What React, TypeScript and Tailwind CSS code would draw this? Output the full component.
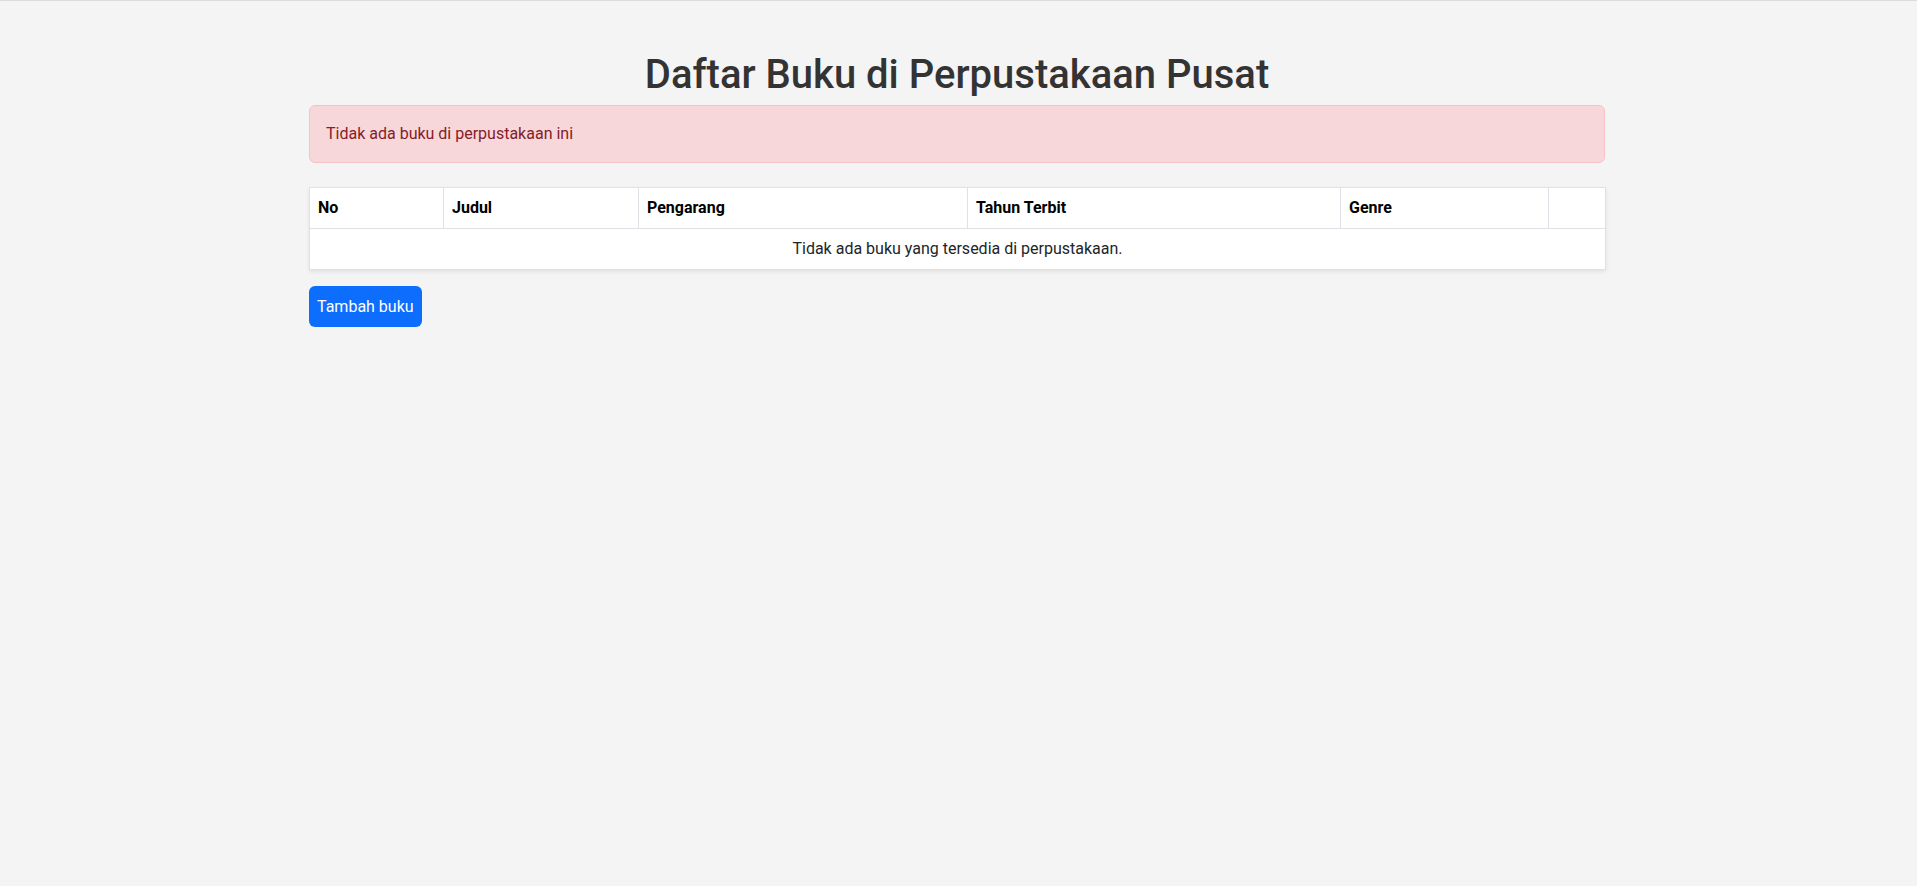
import React from "react";

const cols = [
  { label: "No", w: "w-[134px]" },
  { label: "Judul", w: "w-[195px]" },
  { label: "Pengarang", w: "w-[329px]" },
  { label: "Tahun Terbit", w: "w-[373px]" },
  { label: "Genre", w: "w-[208px]" },
  { label: "", w: "w-[57px]" },
];

export default function App() {
  return (
    <div className="min-h-screen bg-[#f4f4f4] border-t border-[#dcdcdc] font-['Roboto',_'Liberation_Sans',_sans-serif] text-base text-[#212529]">
      <div className="mx-auto w-[1299px] pr-[3px] pt-[50px]">
        <h1 className="mb-[6px] text-center text-[40px] font-medium leading-[48px] text-[#333333]">
          Daftar Buku di Perpustakaan Pusat
        </h1>
        <div className="mb-6 rounded-md border border-[#f5c2c7] bg-[#f8d7da] p-4 leading-6 text-[#842029]">
          Tidak ada buku di perpustakaan ini
        </div>
        <table className="mb-4 w-full table-fixed border-collapse border border-[#dee2e6] bg-white shadow-[0_2px_4px_rgba(0,0,0,0.08)]">
          <colgroup>
            {cols.map((c, i) => (
              <col key={i} className={c.w} />
            ))}
          </colgroup>
          <thead>
            <tr>
              {cols.map((c, i) => (
                <th
                  key={i}
                  className="h-[40px] border border-[#dee2e6] px-2 py-2 text-left font-bold leading-6 text-black"
                >
                  {c.label}
                </th>
              ))}
            </tr>
          </thead>
          <tbody>
            <tr>
              <td colSpan={6} className="h-[40px] border border-[#dee2e6] px-2 py-2 text-center leading-6 text-[#212529]">
                Tidak ada buku yang tersedia di perpustakaan.
              </td>
            </tr>
          </tbody>
        </table>
        <button className="flex h-[41px] items-center rounded-md bg-[#0d6efd] px-2 text-base leading-6 text-white">
          Tambah buku
        </button>
      </div>
    </div>
  );
}
